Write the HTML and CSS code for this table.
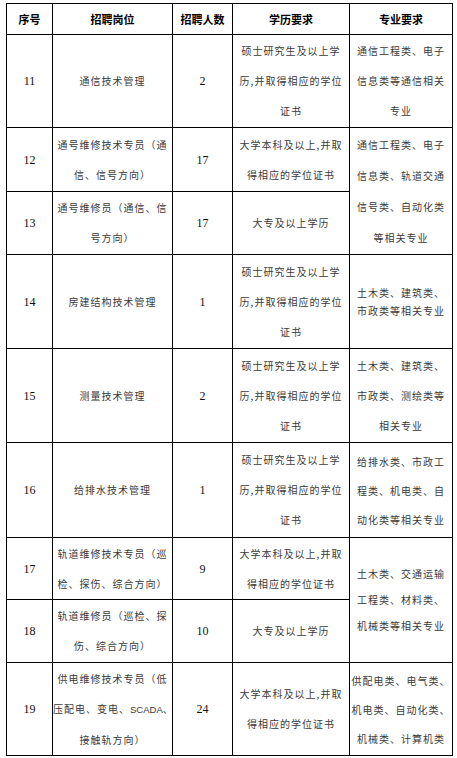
FILE: index.html
```html
<!DOCTYPE html>
<html lang="zh-CN">
<head>
<meta charset="utf-8">
<title>招聘岗位</title>
<link rel="stylesheet" href="styles.css">
</head>
<body>
<table class="jobs">
  <colgroup>
    <col class="c-no">
    <col class="c-pos">
    <col class="c-cnt">
    <col class="c-edu">
    <col class="c-major">
  </colgroup>
  <thead>
    <tr class="h-head">
      <th>序号</th>
      <th>招聘岗位</th>
      <th>招聘人数</th>
      <th>学历要求</th>
      <th>专业要求</th>
    </tr>
  </thead>
  <tbody>
    <tr class="h-93">
      <td class="num">11</td>
      <td class="txt">通信技术管理</td>
      <td class="num">2</td>
      <td class="txt">硕士研究生及以上学<br>历,并取得相应的学位<br>证书</td>
      <td class="txt">通信工程类、电子<br>信息类等通信相关<br>专业</td>
    </tr>
    <tr class="h-64">
      <td class="num">12</td>
      <td class="txt">通号维修技术专员（通<br>信、信号方向）</td>
      <td class="num">17</td>
      <td class="txt">大学本科及以上,并取<br>得相应的学位证书</td>
      <td class="txt lh-31" rowspan="2">通信工程类、电子<br>信息类、轨道交通<br>信号类、自动化类<br>等相关专业</td>
    </tr>
    <tr class="h-63">
      <td class="num">13</td>
      <td class="txt">通号维修员（通信、信<br>号方向）</td>
      <td class="num">17</td>
      <td class="txt">大专及以上学历</td>
    </tr>
    <tr class="h-94">
      <td class="num">14</td>
      <td class="txt">房建结构技术管理</td>
      <td class="num">1</td>
      <td class="txt">硕士研究生及以上学<br>历,并取得相应的学位<br>证书</td>
      <td class="txt lh-18">土木类、建筑类、<br>市政类等相关专业</td>
    </tr>
    <tr class="h-94">
      <td class="num">15</td>
      <td class="txt">测量技术管理</td>
      <td class="num">2</td>
      <td class="txt">硕士研究生及以上学<br>历,并取得相应的学位<br>证书</td>
      <td class="txt">土木类、建筑类、<br>市政类、测绘类等<br>相关专业</td>
    </tr>
    <tr class="h-95">
      <td class="num">16</td>
      <td class="txt">给排水技术管理</td>
      <td class="num">1</td>
      <td class="txt">硕士研究生及以上学<br>历,并取得相应的学位<br>证书</td>
      <td class="txt lh-29">给排水类、市政工<br>程类、机电类、自<br>动化类等相关专业</td>
    </tr>
    <tr class="h-62">
      <td class="num">17</td>
      <td class="txt">轨道维修技术专员（巡<br>检、探伤、综合方向）</td>
      <td class="num">9</td>
      <td class="txt">大学本科及以上,并取<br>得相应的学位证书</td>
      <td class="txt lh-26" rowspan="2">土木类、交通运输<br>工程类、材料类、<br>机械类等相关专业</td>
    </tr>
    <tr class="h-63">
      <td class="num">18</td>
      <td class="txt">轨道维修员（巡检、探<br>伤、综合方向）</td>
      <td class="num">10</td>
      <td class="txt">大专及以上学历</td>
    </tr>
    <tr class="h-93">
      <td class="num">19</td>
      <td class="txt">供电维修技术专员（低<br>压配电、变电、<span class="latin">SCADA</span>、<br>接触轨方向）</td>
      <td class="num">24</td>
      <td class="txt">大学本科及以上,并取<br>得相应的学位证书</td>
      <td class="txt lh-29">供配电类、电气类、<br>机电类、自动化类、<br>机械类、计算机类</td>
    </tr>
  </tbody>
</table>
</body>
</html>
```

FILE: styles.css
```css
html, body {
  margin: 0;
  padding: 0;
  background: #ffffff;
}

body {
  font-family: "Noto Sans CJK SC", "Noto Sans", sans-serif;
}

.jobs {
  margin: 3px 0 0 6px;
  width: 446px;
  table-layout: fixed;
  border-collapse: collapse;
}

.c-no { width: 46px; }
.c-pos { width: 120px; }
.c-cnt { width: 60px; }
.c-edu { width: 117px; }
.c-major { width: 103px; }

.jobs th,
.jobs td {
  border: 1px solid #000;
  padding: 0;
  text-align: center;
  vertical-align: middle;
  white-space: nowrap;
  overflow: visible;
}

.jobs th {
  font-family: "Noto Sans CJK SC", sans-serif;
  font-weight: 700;
  font-size: 11px;
  color: #000;
  line-height: 14px;
}

.h-head { height: 31px; }
.h-62 { height: 62px; }
.h-63 { height: 63px; }
.h-64 { height: 64px; }
.h-93 { height: 93px; }
.h-94 { height: 94px; }
.h-95 { height: 95px; }

.num {
  font-family: "Liberation Serif", "Times New Roman", serif;
  font-size: 12px;
  color: #111;
  line-height: 14px;
}

.txt {
  font-family: "Noto Sans CJK SC", sans-serif;
  font-size: 10px;
  letter-spacing: 1px;
  color: #3a3a3a;
  line-height: 30px;
}

.lh-18 { line-height: 18px; }
.lh-26 { line-height: 26px; }
.lh-29 { line-height: 29px; }
.lh-31 { line-height: 31px; }

.latin {
  font-family: "Liberation Sans", Arial, sans-serif;
  font-size: 9.5px;
  letter-spacing: 0;
}
```
